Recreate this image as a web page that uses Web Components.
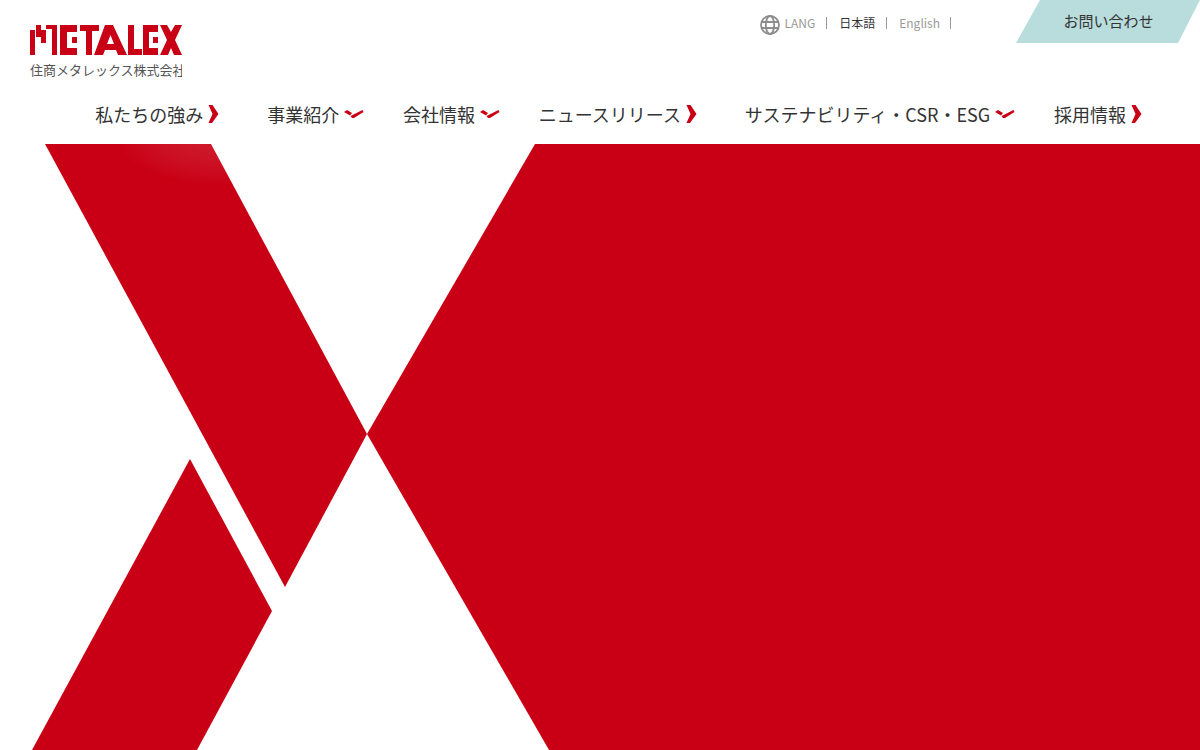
<!DOCTYPE html>
<html lang="ja">
<head>
<meta charset="utf-8">
<title>住商メタレックス株式会社</title>
<style>
html, body {
  margin: 0;
  height: 100%;
  overflow: hidden;
  background: #fff;
  color: #333;
  font-family: "Noto Sans CJK JP", "Noto Sans", sans-serif;
}
</style>
</head>
<body>
<site-header>
  <site-logo slot="logo">住商メタレックス株式会社</site-logo>
  <lang-switch slot="tools"></lang-switch>
  <contact-button slot="tools">お問い合わせ</contact-button>
  <nav-item slot="nav" arrow="right">私たちの強み</nav-item>
  <nav-item slot="nav" arrow="down">事業紹介</nav-item>
  <nav-item slot="nav" arrow="down">会社情報</nav-item>
  <nav-item slot="nav" arrow="right">ニュースリリース</nav-item>
  <nav-item slot="nav" arrow="down">サステナビリティ・CSR・ESG</nav-item>
  <nav-item slot="nav" arrow="right">採用情報</nav-item>
</site-header>
<hero-graphic></hero-graphic>

<script>
'use strict';

class SiteHeader extends HTMLElement {
  constructor() {
    super();
    const shadowRoot = this.attachShadow({mode: 'open'});
    shadowRoot.innerHTML = `
<style>
:host {
  display: block;
  height: 144px;
  box-sizing: border-box;
}
.top {
  display: flex;
  justify-content: space-between;
  align-items: flex-start;
  height: 93px;
  padding-left: 30px;
  box-sizing: border-box;
}
.tools {
  display: flex;
  align-items: flex-start;
}
nav {
  display: flex;
  justify-content: flex-end;
  gap: 38.8px;
  padding-right: 49px;
}
</style>
<div class="top">
  <slot name="logo"></slot>
  <div class="tools"><slot name="tools"></slot></div>
</div>
<nav><slot name="nav"></slot></nav>
`;
  }
}

class SiteLogo extends HTMLElement {
  constructor() {
    super();
    const shadowRoot = this.attachShadow({mode: 'open'});
    shadowRoot.innerHTML = `
<style>
:host {
  display: block;
  width: 153px;
  padding-top: 25px;
}
svg {
  display: block;
}
.name {
  width: 152px;
  height: 18px;
  margin-top: 6px;
  overflow: hidden;
  white-space: nowrap;
  font-size: 13px;
  line-height: 18px;
  color: #555;
}
</style>
<svg width="152" height="30" viewBox="30 25 152 30" fill="#c90015">
  <!-- M -->
  <path d="M30 30h5v25h-5zM36 25h5v12h-5zM41 30h5v13h-5zM46 25h11v30h-5v-26h-6z"></path>
  <!-- E -->
  <path d="M60 25h17v7h-10v16h10v7h-17zM72 37h5v6h-5z"></path>
  <!-- T -->
  <path d="M80 25h19v6h-7v24h-6v-24h-6z"></path>
  <!-- A -->
  <path fill-rule="evenodd" d="M105 25h8l14 30h-9l-2-5h-11l-2 5h-9zM110.500 35l-3.500 9h7z"></path>
  <!-- L -->
  <path d="M128 25h6v24h8v6h-14z"></path>
  <!-- E -->
  <path d="M143 25h15v7h-9v16h9v7h-15zM153 37h5v6h-5z"></path>
  <!-- X -->
  <path d="M160 25h7l4 7 4-7h7l-7 15 7 15h-8l-3-7-3 7h-8l7-15z"></path>
</svg>
<div class="name"><slot></slot></div>
`;
  }
}

class LangSwitch extends HTMLElement {
  constructor() {
    super();
    const shadowRoot = this.attachShadow({mode: 'open'});
    shadowRoot.innerHTML = `
<style>
:host {
  display: flex;
  align-items: center;
  height: 46px;
  margin-right: 65px;
  font-size: 12px;
  color: #999;
}
svg {
  margin-right: 4px;
  position: relative;
  top: 2px;
}
span {
  line-height: 12px;
  padding-right: 11px;
  margin-right: 12px;
  border-right: 1px solid #999;
}
span:last-child {
  margin-right: 0;
  padding-right: 10px;
}
.current {
  color: #333;
}
</style>
<svg width="20" height="20" viewBox="0 0 20 20" fill="none" stroke="#8c8c8c" stroke-width="1.8">
  <circle cx="10" cy="10" r="9"></circle>
  <ellipse cx="10" cy="10" rx="4.2" ry="9"></ellipse>
  <path d="M1.600 7h16.800M1.600 13h16.800"></path>
</svg>
<span>LANG</span>
<span class="current">日本語</span>
<span>English</span>
`;
  }
}

class ContactButton extends HTMLElement {
  constructor() {
    super();
    const shadowRoot = this.attachShadow({mode: 'open'});
    shadowRoot.innerHTML = `
<style>
:host {
  display: flex;
  justify-content: center;
  align-items: center;
  box-sizing: border-box;
  width: 184px;
  height: 43px;
  padding: 0 0 2px 1px;
  font-size: 15px;
  color: #333;
  background: #b9dcdd;
  clip-path: polygon(24px 0, 100% 0, 162px 100%, 0 100%);
}
</style>
<slot></slot>
`;
  }
}

class NavItem extends HTMLElement {
  constructor() {
    super();
    const shadowRoot = this.attachShadow({mode: 'open'});
    const isDown = this.getAttribute('arrow') === 'down';
    const shape = isDown
      ? '<polygon points="0,8 3,6 8,9 6,11.500"></polygon><polygon points="6.500,12 18.500,6 19.500,8 10,14 8,14"></polygon>'
      : '<polygon points="0.500,1 4.500,1 10.500,10 4,19 0.500,19 4.500,10"></polygon>';
    shadowRoot.innerHTML = `
<style>
:host {
  display: flex;
  align-items: center;
  gap: 5px;
  height: 42px;
  font-size: 18px;
  color: #333;
  white-space: nowrap;
}
svg {
  flex: none;
}
</style>
<slot></slot>
<svg width="20" height="20" viewBox="0 0 20 20" fill="#c90015">${shape}</svg>
`;
  }
}

class HeroGraphic extends HTMLElement {
  constructor() {
    super();
    const shadowRoot = this.attachShadow({mode: 'open'});
    shadowRoot.innerHTML = `
<style>
:host {
  display: block;
  height: 606px;
}
svg {
  display: block;
}
</style>
<svg width="1200" height="606" viewBox="0 144 1200 606">
  <defs>
    <radialGradient id="shine" gradientUnits="userSpaceOnUse" cx="215" cy="135" r="100" gradientTransform="translate(215 135) scale(1 .5) translate(-215 -135)">
      <stop offset="0" stop-color="#fff" stop-opacity=".12"></stop>
      <stop offset=".6" stop-color="#fff" stop-opacity=".06"></stop>
      <stop offset="1" stop-color="#fff" stop-opacity="0"></stop>
    </radialGradient>
  </defs>
  <polygon points="45,144 211,144 367,434 285,587" fill="#c90015"></polygon>
  <polygon points="45,144 211,144 367,434 285,587" fill="url(#shine)"></polygon>
  <polygon points="190,459 272,611 197,750 32,750" fill="#c90015"></polygon>
  <polygon points="535,144 1200,144 1200,750 549,750 367,434" fill="#c90015"></polygon>
</svg>
`;
  }
}

customElements.define('site-header', SiteHeader);
customElements.define('site-logo', SiteLogo);
customElements.define('lang-switch', LangSwitch);
customElements.define('contact-button', ContactButton);
customElements.define('nav-item', NavItem);
customElements.define('hero-graphic', HeroGraphic);
</script>
</body>
</html>
